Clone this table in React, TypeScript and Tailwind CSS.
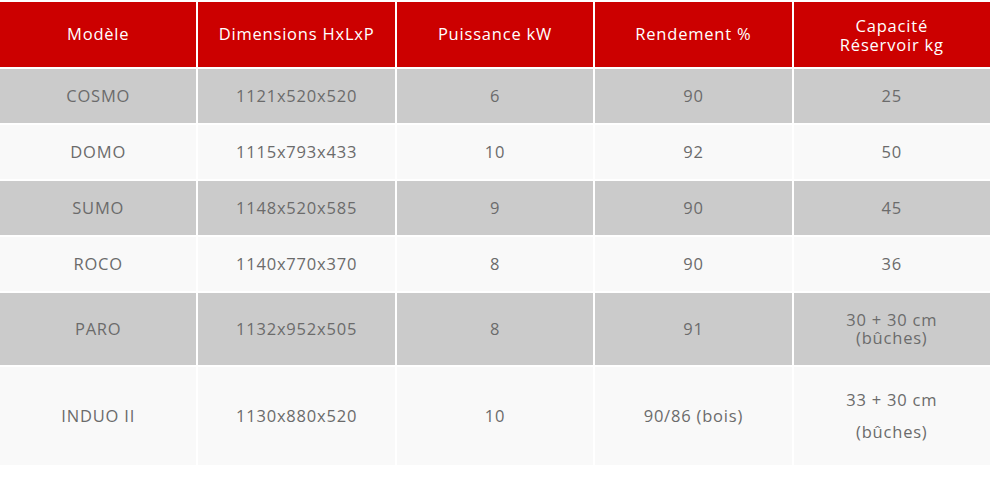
import React from "react";

type Row = {
  model: string;
  dims: string;
  power: string;
  yieldPct: string;
  capacity: React.ReactNode;
  tall?: string;
};

const rows: Row[] = [
  { model: "COSMO", dims: "1121x520x520", power: "6", yieldPct: "90", capacity: "25" },
  { model: "DOMO", dims: "1115x793x433", power: "10", yieldPct: "92", capacity: "50" },
  { model: "SUMO", dims: "1148x520x585", power: "9", yieldPct: "90", capacity: "45" },
  { model: "ROCO", dims: "1140x770x370", power: "8", yieldPct: "90", capacity: "36" },
  {
    model: "PARO",
    dims: "1132x952x505",
    power: "8",
    yieldPct: "91",
    capacity: (
      <span className="flex flex-col leading-[18px]">
        <span>30 + 30 cm</span>
        <span>(bûches)</span>
      </span>
    ),
    tall: "h-[72px]",
  },
  {
    model: "INDUO II",
    dims: "1130x880x520",
    power: "10",
    yieldPct: "90/86 (bois)",
    capacity: (
      <span className="flex flex-col gap-[14px] leading-[18px]">
        <span>33 + 30 cm</span>
        <span>(bûches)</span>
      </span>
    ),
    tall: "h-[98px]",
  },
];

const headers = ["Modèle", "Dimensions HxLxP", "Puissance kW", "Rendement %"];

function Cell({ children, className }: { children: React.ReactNode; className: string }) {
  return (
    <div className={"flex items-center justify-center text-center " + className}>{children}</div>
  );
}

export default function App() {
  return (
    <div className="w-[992px] h-[477px] bg-white pt-[2px] font-['Open_Sans',sans-serif] text-[16.5px] tracking-[0.8px]">
      <div className="grid w-[990px] grid-cols-5 gap-[2px]">
        {headers.map((h) => (
          <Cell key={h} className="h-[65px] bg-[#cc0000] text-white">
            {h}
          </Cell>
        ))}
        <Cell className="h-[65px] bg-[#cc0000] text-white">
          <span className="flex flex-col leading-[19px]">
            <span>Capacité</span>
            <span>Réservoir kg</span>
          </span>
        </Cell>

        {rows.map((r, i) => {
          const bg = i % 2 == 0 ? "bg-[#cbcbcb]" : "bg-[#f9f9f9]";
          const h = r.tall || "h-[54px]";
          const cls = `${h} ${bg} text-[#6b6b6b]`;
          return (
            <React.Fragment key={r.model}>
              <Cell className={cls}>{r.model}</Cell>
              <Cell className={cls}>{r.dims}</Cell>
              <Cell className={cls}>{r.power}</Cell>
              <Cell className={cls}>{r.yieldPct}</Cell>
              <Cell className={cls}>{r.capacity}</Cell>
            </React.Fragment>
          );
        })}
      </div>
    </div>
  );
}
